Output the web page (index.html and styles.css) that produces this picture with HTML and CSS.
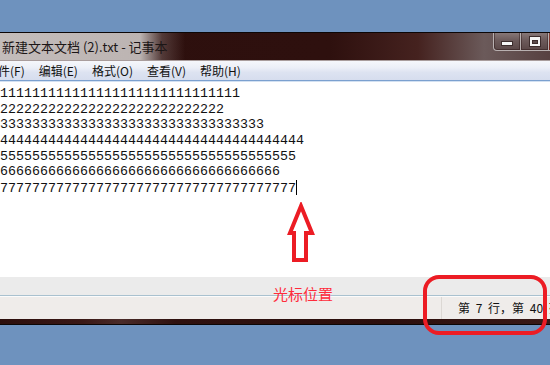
FILE: index.html
```html
<!DOCTYPE html>
<html lang="zh-CN">
<head>
    <meta charset="UTF-8">
    <title>新建文本文档 (2).txt - 记事本</title>
    <link rel="stylesheet" href="styles.css">
</head>
<body>
    <div class="window">
        <div class="titlebar">
            <span class="title">新建文本文档 (2).txt - 记事本</span>
            <div class="caption-buttons">
                <div class="cap-btn min"><span class="glyph-min"></span></div>
                <div class="cap-btn max"><span class="glyph-max"></span></div>
                <div class="cap-btn close"></div>
            </div>
        </div>
        <div class="menubar">
            <span class="menu-item">文件(F)</span>
            <span class="menu-item">编辑(E)</span>
            <span class="menu-item">格式(O)</span>
            <span class="menu-item">查看(V)</span>
            <span class="menu-item">帮助(H)</span>
        </div>
        <div class="editor">
            <div class="line">111111111111111111111111111111</div>
            <div class="line">2222222222222222222222222222</div>
            <div class="line">333333333333333333333333333333333</div>
            <div class="line">44444444444444444444444444444444444444</div>
            <div class="line">5555555555555555555555555555555555555</div>
            <div class="line">66666666666666666666666666666666666</div>
            <div class="line">7777777777777777777777777777777777777<span class="caret"></span></div>
        </div>
        <div class="hscroll"></div>
        <div class="statusbar">
            <div class="status-fill"></div>
            <div class="status-cell">第 7 行，第 40 列</div>
        </div>
        <div class="frame-bottom"></div>
    </div>

    <!-- annotations drawn over the screenshot -->
    <svg class="arrow" width="34" height="64" viewBox="0 0 34 64">
        <polygon points="16,4 5,31 9,31 9,58 21,58 21,31 27,31" fill="none" stroke="#ec1c24" stroke-width="4" stroke-linejoin="miter"/>
    </svg>
    <div class="note">光标位置</div>
    <div class="ring"></div>
</body>
</html>
```

FILE: styles.css
```css
body {
    margin: 0;
    width: 550px;
    height: 365px;
    overflow: hidden;
    background: #6e92be;
    position: relative;
    font-family: "Noto Sans CJK SC", "Noto Sans", sans-serif;
}

.window {
    margin-top: 32px;
    border-top: 1px solid #0c0606;
    border-bottom: 1px solid #0c0606;
    display: flex;
    flex-direction: column;
}

.titlebar {
    height: 27px;
    border-bottom: 1px solid #a99d9c;
    display: flex;
    align-items: flex-start;
    overflow: hidden;
    background:
        linear-gradient(90deg, rgba(200,194,192,0.97) 0, rgba(196,189,187,0.95) 140px, rgba(120,100,98,0.5) 162px, rgba(60,30,28,0) 185px),
        linear-gradient(90deg, #2d0f0d 0, #2e100e 60%, #45221f 76%, #6b5a5a 88%, #574141 100%);
}

.title {
    padding-left: 2px;
    line-height: 27px;
    font-size: 13px;
    color: #1c1616;
    white-space: nowrap;
}

.caption-buttons {
    margin-left: auto;
    margin-right: -40px;
    margin-top: -1px;
    display: flex;
}

.cap-btn {
    height: 18px;
    border: 1px solid #b9b1b1;
    border-top: none;
    display: flex;
    align-items: center;
    justify-content: center;
    background: linear-gradient(180deg, #8a7b7b 0, #6d5b5b 45%, #5a4747 100%);
    box-shadow: inset 0 0 0 1px rgba(40,20,20,0.45);
}

.cap-btn.min {
    width: 26px;
    border-radius: 0 0 0 4px;
}

.cap-btn.max {
    width: 27px;
    border-left: none;
}

.cap-btn.close {
    width: 40px;
    border-left: none;
    background: linear-gradient(180deg, #d8705e, #b8281a);
}

.glyph-min {
    width: 10px;
    height: 3px;
    margin-top: 4px;
    background: #f4f4f4;
    box-shadow: 0 0 0 1px #3c2c2c;
}

.glyph-max {
    width: 6px;
    height: 4px;
    border: 2px solid #f4f4f4;
    border-top-width: 3px;
    box-shadow: 0 0 0 1px #3c2c2c, inset 0 0 0 1px #3c2c2c;
    background: #5b4a4a;
}

.menubar {
    height: 19px;
    border-bottom: 1px solid #7ba0cf;
    display: flex;
    align-items: center;
    gap: 14px;
    margin-left: -14px;
    background: linear-gradient(180deg, #f6f7fb 0, #eceff7 35%, #dde3f1 60%, #d6ddee 100%);
}

.menu-item {
    font-size: 12px;
    color: #111;
    white-space: nowrap;
}

.editor {
    height: 191px;
    border-top: 1px solid #d3e1f2;
    padding-top: 4px;
    background: #fff;
    font-family: "Liberation Mono", "Courier New", monospace;
    font-size: 13.33px;
    line-height: 15.67px;
    color: #111;
}

.line {
    white-space: pre;
}

.caret {
    display: inline-block;
    width: 0;
    height: 15px;
    border-left: 1px solid #000;
    vertical-align: -3px;
}

.hscroll {
    height: 18px;
    background: #ebebeb;
    border-bottom: 1px solid #a9c1cf;
}

.statusbar {
    height: 22px;
    border-top: 1px solid #fbfbfb;
    display: flex;
    background: #efecea;
}

.status-fill {
    flex: none;
    width: 441px;
    border-right: 1px solid #dcd8d4;
}

.status-cell {
    padding-left: 16px;
    line-height: 22px;
    font-size: 12px;
    word-spacing: 3px;
    color: #111;
    white-space: pre;
}

.frame-bottom {
    height: 5px;
    background: linear-gradient(90deg, #2c0e0c 0, #3a1816 15%, #4a2b29 22%, #2f110f 32%, #2c0e0c 70%, #3a1a18 100%);
}

.arrow {
    position: absolute;
    left: 285px;
    top: 202px;
}

.note {
    position: absolute;
    left: 273px;
    top: 284px;
    font-size: 15px;
    line-height: 20px;
    color: #ff2b3b;
}

.ring {
    position: absolute;
    left: 423px;
    top: 275px;
    width: 116px;
    height: 52px;
    border: 4px solid #ec1c24;
    border-radius: 16px;
}
```
